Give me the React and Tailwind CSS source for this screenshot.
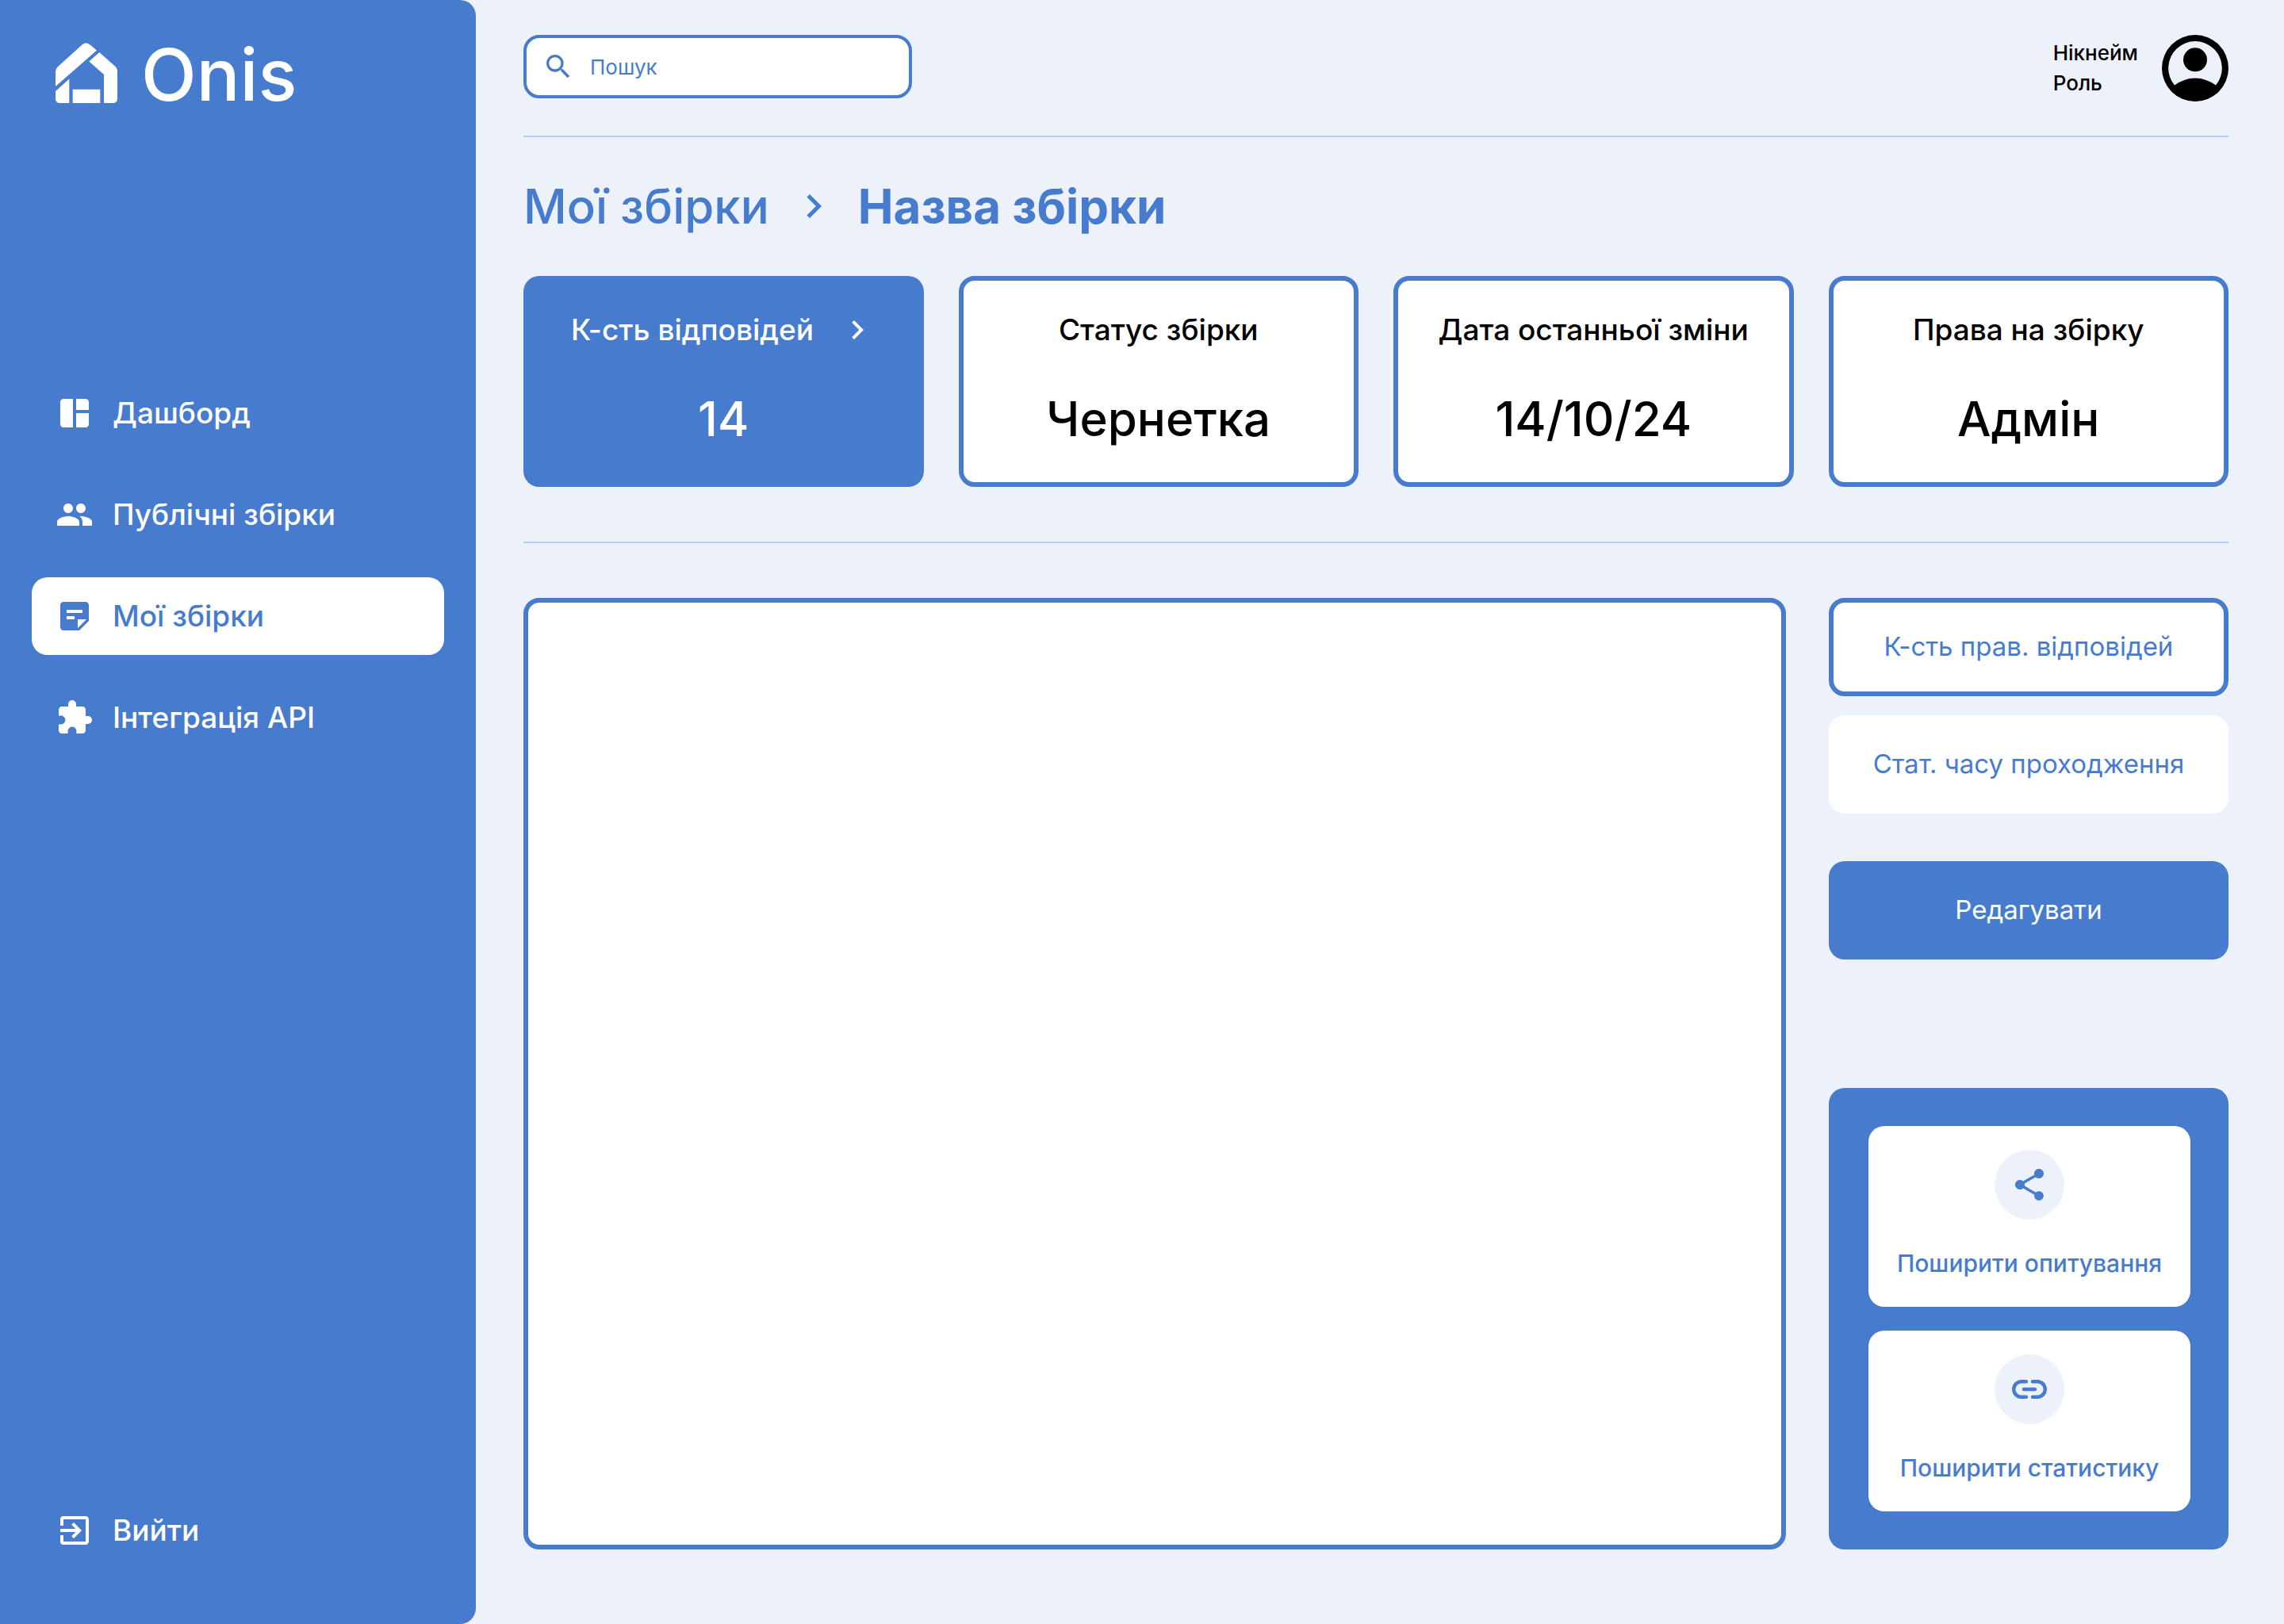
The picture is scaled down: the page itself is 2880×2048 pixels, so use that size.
import {
  MdSpaceDashboard,
  MdPeople,
  MdStickyNote2,
  MdExtension,
  MdExitToApp,
  MdSearch,
  MdChevronRight,
  MdShare,
} from "react-icons/md";

function Logo() {
  return (
    <svg viewBox="0 0 78 80" className="h-20 w-[78px]" fill="currentColor" aria-hidden="true">
      <path d="M0 55V36.5Q0 33 3 30L34 2Q38.5 -1.6 43 2L52 9.5Z" />
      <path d="M0 61L17.3 45.5V76H6Q0 76 0 70Z" />
      <path d="M21.7 58.7H56.3V76H21.7Z" />
      <path d="M42.3 23.5L55.3 12L75 29.5Q78 32 78 36V70Q78 76 72 76H61V40Z" />
    </svg>
  );
}

function Avatar() {
  return (
    <svg viewBox="0 0 84 84" className="size-[84px]" role="img" aria-label="Профіль">
      <path
        fillRule="evenodd"
        d="M42 0a42 42 0 1 1 0 84a42 42 0 1 1 0-84ZM16 63.5A42.5 42.5 0 0 1 68 63.5A33.8 33.8 0 1 0 16 63.5Z"
      />
      <circle cx="42" cy="31.3" r="15" />
    </svg>
  );
}

function LinkIcon() {
  return (
    <svg viewBox="0 0 48 48" className="size-12" fill="none" stroke="currentColor" strokeWidth="4.4" strokeLinecap="round" aria-hidden="true">
      <path d="M20 14.2H14A9.8 9.8 0 0 0 14 33.8H20M28 14.2H34A9.8 9.8 0 0 1 34 33.8H28M17 24H31" />
    </svg>
  );
}

const navItems = [
  { label: "Дашборд", Icon: MdSpaceDashboard },
  { label: "Публічні збірки", Icon: MdPeople },
  { label: "Мої збірки", Icon: MdStickyNote2, active: true },
  { label: "Інтеграція API", Icon: MdExtension },
];

function NavItem({ label, Icon, active }) {
  return (
    <a
      href="#"
      aria-current={active ? "page" : undefined}
      className={`flex h-[98px] items-center gap-6 rounded-[20px] px-[30px] text-[37px] font-medium ${
        active ? "bg-white text-[#477bce]" : "text-white"
      }`}
    >
      <Icon className="size-12 shrink-0" />
      {label}
    </a>
  );
}

function StatCard({ title, value }) {
  return (
    <div className="flex h-[266px] flex-col items-center rounded-[20px] border-[6px] border-[#477bce] bg-white pt-8 text-black">
      <h2 className="text-[37px] leading-[60px] font-medium">{title}</h2>
      <p className="mt-11 text-[60px] leading-[76px] font-medium">{value}</p>
    </div>
  );
}

function ShareCard({ label, children }) {
  return (
    <button type="button" className="flex h-[228px] flex-col items-center rounded-[20px] bg-white pt-[30px] text-[#477bce]">
      <span className="flex size-[88px] items-center justify-center rounded-full bg-[#ecf1fa]">{children}</span>
      <span className="mt-[35px] text-[30px] leading-10 font-medium whitespace-nowrap">{label}</span>
    </button>
  );
}

export default function App() {
  return (
    <div className="flex min-h-screen bg-[#ecf1fa] font-['Inter',sans-serif] text-[#477bce]">
      <aside className="flex w-[600px] shrink-0 flex-col rounded-r-[20px] bg-[#477bce] px-10 pb-[69px] text-white">
        <div className="flex h-[188px] items-center gap-[30px] pl-[30px]">
          <Logo />
          <span className="text-[91px] leading-none font-medium">Onis</span>
        </div>
        <nav className="mt-[284px] flex flex-col gap-[30px]">
          {navItems.map((item) => (
            <NavItem key={item.label} {...item} />
          ))}
        </nav>
        <div className="mt-auto">
          <NavItem label="Вийти" Icon={MdExitToApp} />
        </div>
      </aside>

      <main className="flex min-w-0 flex-1 flex-col pt-11 pr-[70px] pb-[94px] pl-[60px]">
        <header className="flex h-[129px] items-start justify-between border-b-2 border-[#b0cfff]">
          <label className="flex h-20 w-[490px] items-center gap-5 rounded-[20px] border-4 border-[#477bce] bg-white px-5">
            <MdSearch className="size-10 shrink-0" />
            <input
              type="search"
              aria-label="Пошук"
              placeholder="Пошук"
              className="min-w-0 flex-1 bg-transparent text-[26px] outline-none placeholder:text-[#477bce] placeholder:opacity-100"
            />
          </label>
          <div className="flex items-center gap-[30px] text-black">
            <div className="text-[26px] leading-[38px] font-medium">
              <p>Нікнейм</p>
              <p>Роль</p>
            </div>
            <Avatar />
          </div>
        </header>

        <nav className="mt-[47px] flex h-20 items-center gap-[26px] text-[60px]" aria-label="Шлях">
          <a href="#" className="font-medium">Мої збірки</a>
          <MdChevronRight className="size-[60px]" />
          <h1 className="font-bold">Назва збірки</h1>
        </nav>

        <section className="mt-12 grid grid-cols-4 gap-11">
          <button type="button" className="flex h-[266px] flex-col rounded-[20px] bg-[#477bce] px-[60px] pt-[38px] text-white">
            <span className="flex h-[60px] w-full items-center justify-between text-[37px] font-medium whitespace-nowrap">
              К-сть відповідей
              <MdChevronRight className="size-12" />
            </span>
            <span className="mt-11 w-full text-center text-[60px] leading-[76px] font-medium">14</span>
          </button>
          <StatCard title="Статус збірки" value="Чернетка" />
          <StatCard title="Дата останньої зміни" value="14/10/24" />
          <StatCard title="Права на збірку" value="Адмін" />
        </section>

        <hr className="mt-[69px] border-t-2 border-[#b0cfff]" />

        <div className="mt-[69px] flex flex-1 gap-[54px]">
          <section aria-label="Статистика" className="flex-1 rounded-[20px] border-[6px] border-[#477bce] bg-white" />
          <aside className="flex w-[504px] flex-col text-[33px]">
            <button type="button" className="h-[124px] rounded-[20px] border-[6px] border-[#477bce] bg-white">
              К-сть прав. відповідей
            </button>
            <button type="button" className="mt-6 h-[124px] rounded-[20px] bg-white">
              Стат. часу проходження
            </button>
            <button type="button" className="mt-[60px] h-[124px] rounded-[20px] bg-[#477bce] text-white">
              Редагувати
            </button>
            <div className="mt-auto flex flex-col gap-[30px] rounded-[20px] bg-[#477bce] py-12 pr-12 pl-[50px]">
              <ShareCard label="Поширити опитування">
                <MdShare className="size-12" />
              </ShareCard>
              <ShareCard label="Поширити статистику">
                <LinkIcon />
              </ShareCard>
            </div>
          </aside>
        </div>
      </main>
    </div>
  );
}
